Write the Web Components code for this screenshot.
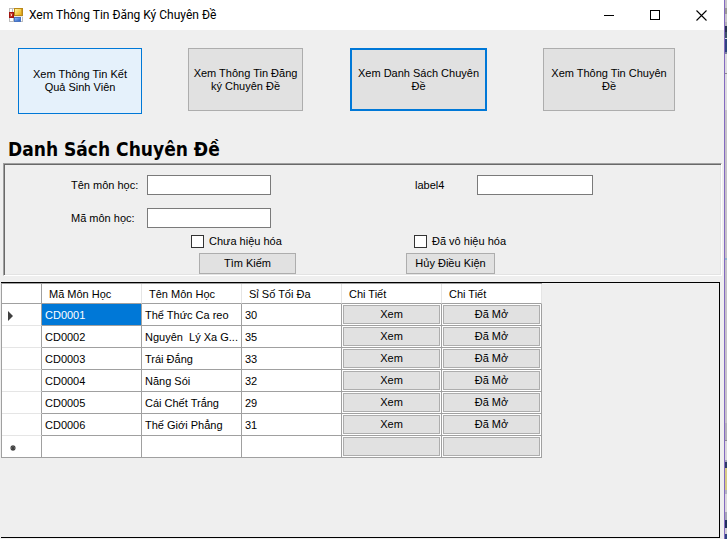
<!DOCTYPE html>
<html lang="vi">
<head>
<meta charset="utf-8">
<title>Xem Thông Tin Đăng Ký Chuyên Đề</title>
<style>
  html, body { height: 100%; margin: 0; }
  body { overflow: hidden; background: #efefef; color: #000; font: 11px/13px "Liberation Sans", Arial, sans-serif; }
</style>
</head>
<body>
<app-window>
  <title-bar slot="title">Xem Thông Tin Đăng Ký Chuyên Đề</title-bar>
  <nav-tiles></nav-tiles>
  <section-title>Danh Sách Chuyên Đề</section-title>
  <filter-panel></filter-panel>
  <course-table></course-table>
</app-window>

<script>
const define = (name, html, setup) => {
  const template = document.createElement('template');
  template.innerHTML = `<style>:host,*{box-sizing:border-box}</style>` + html;
  customElements.define(name, class extends HTMLElement {
    constructor() {
      super();
      this.attachShadow({ mode: 'open' }).append(template.content.cloneNode(true));
    }
    connectedCallback() {
      if (setup && !this.ready) { this.ready = true; setup(this, this.shadowRoot); }
    }
  });
};

define('app-window', `
  <style>
    :host { display: flex; height: 100vh; }
    main { flex: 1; min-width: 0; display: flex; flex-direction: column; border-right: 1px solid #8469c0; }
    aside {
      width: 2px;
      background: linear-gradient(#c9c5cb 0 8px, #9c9a98 8px 14px, #c9c5cb 14px 22px, #b4b2ba 22px 26px, #26304f 26px 32px,
        #3a5068 32px 38px, #d8dae4 38px 39px, #2f4380 39px 52px, #78809c 52px 54px, #dcdade 54px 73px, #8c8a90 73px 74px,
        #dcdade 74px 110px, #c6c2c8 110px 258px, #8fb2cf 258px 260px, #c6c2c8 260px 423px, #b6b2bc 423px 440px,
        #8c8894 440px 441px, #dcd8dc 441px 460px, #a4a4b8 460px 462px, #2d3c66 462px 468px, #d8cc86 468px 490px,
        #b4b4c0 490px 494px, #dcd8dc 494px 512px, #a8a8b8 512px 520px, #20305c 520px 528px, #d0ccd4 528px 534px, #2f4380 534px);
    }
  </style>
  <main><slot name="title"></slot><slot></slot></main>
  <aside></aside>
`);

define('title-bar', `
  <style>
    :host { display: flex; align-items: center; height: 30px; flex: none; padding-left: 9px; background: #fff;
      font: 12px/16px Roboto, "Noto Sans", sans-serif; }
    .logo { width: 14px; height: 14px; margin-right: 6px; }
    h1 { flex: 1; margin: 0; font: inherit; white-space: nowrap; }
    button { width: 46px; height: 28px; padding: 0; border: 0; background: none; display: grid; place-items: center; }
    svg { display: block; }
  </style>
  <svg class="logo" viewBox="0 0 14 14" shape-rendering="crispEdges" aria-hidden="true">
    <defs>
      <linearGradient id="r" x2="1" y2="1"><stop stop-color="#e46a50"/><stop offset="1" stop-color="#a80c08"/></linearGradient>
      <linearGradient id="y" x2="1" y2="1"><stop stop-color="#fff3a0"/><stop offset="1" stop-color="#eab010"/></linearGradient>
      <linearGradient id="b" x2="1" y2="1"><stop stop-color="#8cb8f4"/><stop offset="1" stop-color="#2c62c4"/></linearGradient>
    </defs>
    <path d="M0 0h14v14H0z" fill="#bdbdbd"/>
    <path d="M1 1h2v3H1zM1 10h3v3H1zM12 9h1v4h-1zM4 1h1v3H4z" fill="#fff"/>
    <path d="M0 4h5v6H0z" fill="#a01410"/><path d="M1 5h3v4H1z" fill="url(#r)"/><path d="M2 6h1v2H2z" fill="#f6d0c0"/>
    <path d="M5 0h9v8H5z" fill="#b98818"/><path d="M6 1h6v6H6z" fill="url(#y)"/><path d="M12 1h1v6h-1z" fill="#d8a020"/>
    <path d="M5 9h7v5H5z" fill="#4a74c0"/><path d="M6 10h5v3H6z" fill="url(#b)"/><path d="M5 8h9v1H5z" fill="#e8e8e8"/>
  </svg>
  <h1><slot></slot></h1>
  <button aria-label="Thu nhỏ"><svg width="11" height="11" shape-rendering="crispEdges"><path d="M0 5h10v1H0z"/></svg></button>
  <button aria-label="Phóng to"><svg width="11" height="11" shape-rendering="crispEdges"><path d="M.5 .5h9v9h-9z" fill="none" stroke="#000"/></svg></button>
  <button aria-label="Đóng"><svg width="11" height="11"><path d="M.5 .5l10 10M10.5 .5l-10 10" stroke="#000" stroke-width="1.1"/></svg></button>
`);

define('nav-tiles', `
  <style>
    :host { display: grid; grid-template-columns: 18fr 124fr 46fr 115fr 47fr 137fr 56fr 132fr 49fr;
      align-items: start; padding-top: 18px; height: 108px; flex: none; }
    button { height: 63px; padding: 0 4px; border: 1px solid #adadad; background: #e1e1e1; color: inherit; font: inherit; }
    button:nth-of-type(1) { grid-column: 2; height: 66px; padding: 0 12px; }
    button:nth-of-type(2) { grid-column: 4; }
    button:nth-of-type(3) { grid-column: 6; }
    button:nth-of-type(4) { grid-column: 8; }
    .hover { background: #e5f1fb; border-color: #0078d7; }
    .focus { border: 2px solid #0078d7; }
  </style>
  <button class="hover">Xem Thông Tin Kết<br>Quả Sinh Viên</button>
  <button>Xem Thông Tin Đăng<br>ký Chuyên Đề</button>
  <button class="focus">Xem Danh Sách Chuyên<br>Đề</button>
  <button>Xem Thông Tin Chuyên<br>Đề</button>
`);

define('section-title', `
  <style>
    :host { display: block; flex: none; height: 25px; padding-left: 8px; }
    h2 { margin: 0; font: bold 19px/22px "DejaVu Sans Condensed", "Noto Sans", sans-serif; white-space: nowrap; }
  </style>
  <h2><slot></slot></h2>
`);

define('form-field', `
  <style>
    :host { display: contents; }
    label { white-space: nowrap; align-self: center; }
    input { min-width: 0; width: 100%; height: 20px; border: 1px solid #7a7a7a; border-radius: 0; background: #fff; font: inherit; padding: 2px; }
  </style>
  <label for="f"></label><input id="f" type="text">
`, (el, root) => { root.querySelector('label').textContent = el.getAttribute('label'); });

define('check-field', `
  <style>
    :host { display: block; }
    label { display: flex; align-items: center; gap: 5px; white-space: nowrap; }
    input { appearance: none; margin: 0; width: 13px; height: 13px; border: 1px solid #333; background: #fff; }
    input:checked { background: #0078d7; }
  </style>
  <label><input type="checkbox"><slot></slot></label>
`);

define('filter-panel', `
  <style>
    :host { display: block; flex: none; height: 113px; margin: 0 2px 6px 3px; padding-top: 11px;
      border: 1px solid; border-color: #a0a0a0 #fff #fff #a0a0a0;
      box-shadow: inset 1px 1px #696969, inset -1px -1px #e3e3e3; }
    div { display: grid; padding: 0 1px; }
    .fields { grid-template-columns: 66fr 76fr 124fr 144fr 62fr 116fr 127fr; row-gap: 13px; }
    .checks { grid-template-columns: 186fr 223fr 306fr; margin: 7px 0 5px; }
    .actions { grid-template-columns: 194fr 97fr 110fr 89fr 225fr; }
    button { height: 21px; padding: 0; border: 1px solid #adadad; background: #e1e1e1; color: inherit; font: inherit; white-space: nowrap; }
  </style>
  <div class="fields">
    <span></span><form-field label="Tên môn học:"></form-field>
    <span></span><form-field label="label4"></form-field>
    <span></span><span></span><form-field label="Mã môn học:"></form-field>
  </div>
  <div class="checks"><span></span><check-field>Chưa hiệu hóa</check-field><check-field>Đã vô hiệu hóa</check-field></div>
  <div class="actions"><span></span><button>Tìm Kiếm</button><span></span><button>Hủy Điều Kiện</button></div>
`);

define('course-table', `
  <style>
    :host { display: block; flex: 1; min-height: 0; margin: 0 4px 1px 1px; border: 1px solid #000; border-left: 0; }
    table { table-layout: fixed; width: 541px; border-collapse: separate; border-spacing: 0; background: #fff;
      border: solid #a0a0a0; border-width: 1px 0 0 1px; }
    .mark { width: 40px; }
    th, td { padding: 2px 0 0 3px; font-weight: normal; text-align: left; white-space: pre; overflow: hidden;
      border: solid #a0a0a0; border-width: 0 1px 1px 0; }
    thead th { height: 20px; padding: 2px 7px 0; border-right-color: #e5e5e5; }
    thead th:first-child { border-right-color: #a0a0a0; }
    tbody tr { height: 22px; }
    tbody th { padding: 2px 6px 0; border-bottom-color: #e5e5e5; }
    tbody tr:last-child th { border-bottom-color: #a0a0a0; }
    svg { display: block; }
    td.selected { background: #0078d7; background-clip: padding-box; color: #fff; }
    td.action { padding: 1px; }
    .action button { display: block; width: 100%; height: 19px; padding: 0; border: 1px solid #adadad; background: #e1e1e1; color: inherit; font: inherit; }
  </style>
  <table>
    <colgroup><col class="mark"><col><col><col><col><col></colgroup>
    <thead><tr><th></th><th>Mã Môn Học</th><th>Tên Môn Học</th><th>Sỉ Số Tối Đa</th><th>Chi Tiết</th><th>Chi Tiết</th></tr></thead>
    <tbody></tbody>
  </table>
`, (el, root) => {
  const rows = [
    ['CD0001', 'Thể Thức Ca reo', '30'],
    ['CD0002', 'Nguyên  Lý Xa G...', '35'],
    ['CD0003', 'Trái Đắng', '33'],
    ['CD0004', 'Năng Sói', '32'],
    ['CD0005', 'Cái Chết Trắng', '29'],
    ['CD0006', 'Thế Giới Phẳng', '31'],
    ['', '', '']
  ];
  const arrow = '<svg width="10" height="10"><path d="M0 0v10l5-5z" fill="#404040"/></svg>';
  const star = '<svg width="10" height="7"><path d="M5 1v6M2 4h6M3 2l4 4M7 2l-4 4" stroke="#404040" stroke-width="1.2"/></svg>';
  root.querySelector('tbody').innerHTML = rows.map((row, i) => {
    const last = i === rows.length - 1;
    return `<tr><th>${i === 0 ? arrow : last ? star : ''}</th>` +
      row.map((v, c) => `<td${i + c === 0 ? ' class="selected"' : ''}>${v}</td>`).join('') +
      ['Xem', 'Đã Mở'].map(v => `<td class="action"><button${last ? ` aria-label="${v}"` : ''}>${last ? '' : v}</button></td>`).join('') + '</tr>';
  }).join('');
});
</script>
</body>
</html>
